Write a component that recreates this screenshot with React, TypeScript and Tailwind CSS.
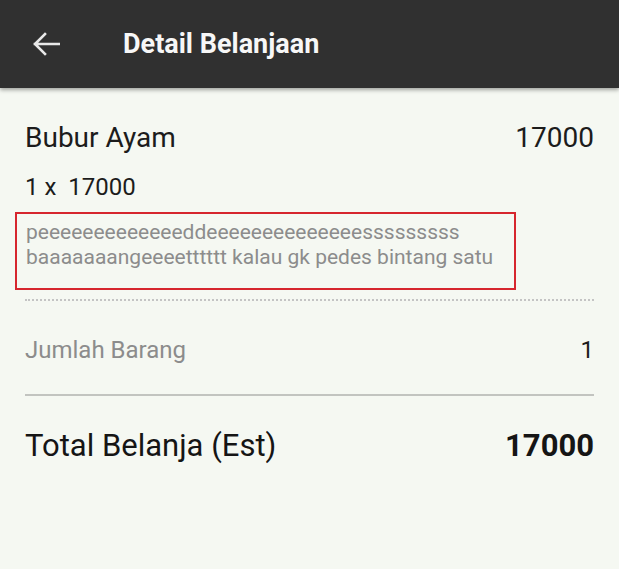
import React from "react";

const line1 = "p" + "e".repeat(13) + "dd" + "e".repeat(14) + "s".repeat(9);

export default function App() {
  return (
    <div
      className="w-[619px] h-[569px] bg-[#f5f8f2] overflow-hidden"
      style={{ fontFamily: "Roboto, 'Noto Sans', sans-serif" }}
    >
      <div className="h-[88px] bg-[#303030] flex items-center shadow-[0_2px_4px_rgba(0,0,0,0.35)] relative">
        <div className="ml-[32px] w-[28px] flex items-center">
          <svg width="28" height="24" viewBox="0 0 28 24" fill="none">
            <path d="M27 12H3M13 2L3 12L13 22" stroke="#e8e8e8" strokeWidth="2.6" strokeLinecap="square" />
          </svg>
        </div>
        <div className="ml-[63px] text-[27px] font-bold text-[#f7f7f7]">Detail Belanjaan</div>
      </div>

      <div className="px-[25px] pt-[34px]">
        <div className="flex justify-between items-baseline text-[28px] leading-[32px] text-[#1c1c1c]">
          <span>Bubur Ayam</span>
          <span>17000</span>
        </div>
        <div className="mt-[19px] text-[24px] leading-[28px] text-[#1c1c1c]">1 x&nbsp; 17000</div>
        <div className="mt-[11px] -ml-[10px] w-[501px] h-[78px] border-2 border-[#d6262e] pl-[9px] pt-[6px] text-[21px] leading-[25px] text-[#8c8c8c]">
          <div>{line1}</div>
          <div>baaaaaaangeeeetttttt kalau gk pedes bintang satu</div>
        </div>
        <div className="mt-[9px] border-t-2 border-dotted border-[#c4c4c4]" />
        <div className="mt-[35px] flex justify-between items-baseline text-[24px] leading-[28px]">
          <span className="text-[#8c8c8c]">Jumlah Barang</span>
          <span className="text-[#1c1c1c]">1</span>
        </div>
        <div className="mt-[30px] border-t-2 border-[#c2c4c0]" />
        <div className="mt-[32px] flex justify-between items-baseline text-[31px] leading-[36px] text-[#151515]">
          <span>Total Belanja (Est)</span>
          <span className="font-bold">17000</span>
        </div>
      </div>
    </div>
  );
}
